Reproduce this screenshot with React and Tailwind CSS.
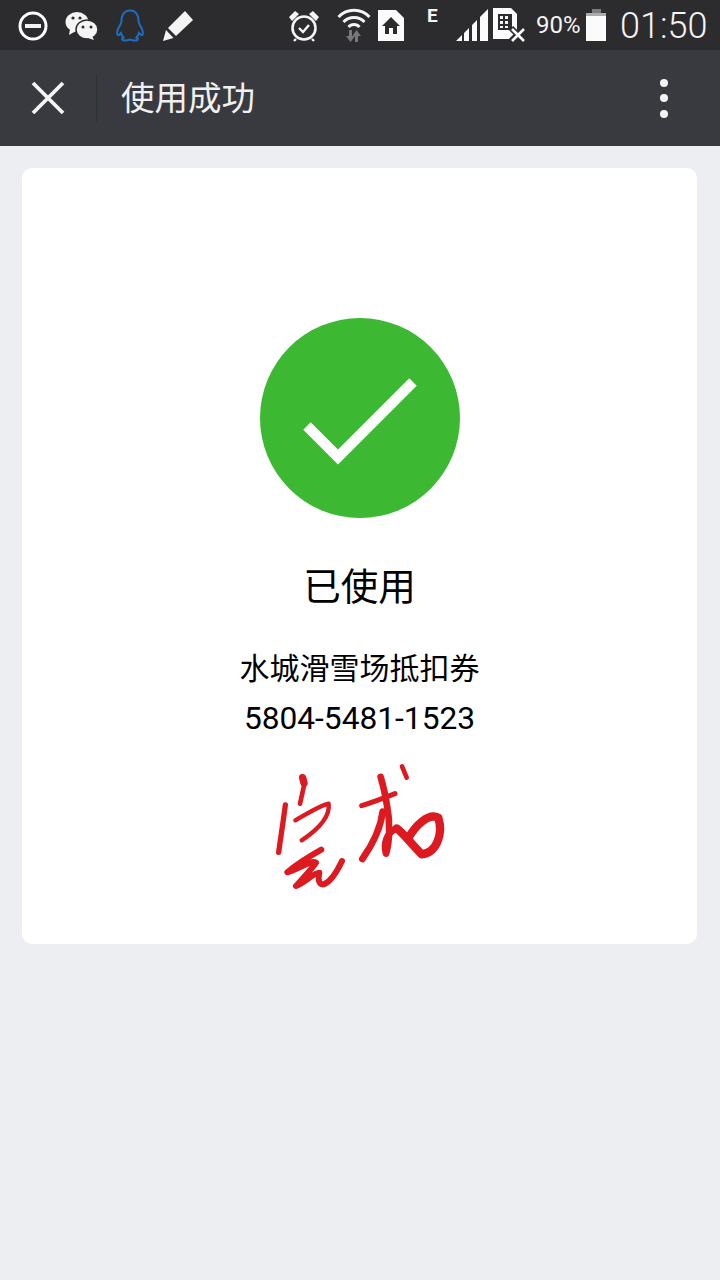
// Coupon "used" result page with a phone status bar and webview header
function StatusIcons() {
  return (
    <>
      {/* do not disturb */}
      <svg width="30" height="30" viewBox="0 0 30 30" className="ml-[18px] shrink-0">
        <circle cx="15" cy="15" r="13" fill="none" stroke="#fff" strokeWidth="3" />
        <rect x="7" y="13" width="16" height="4" fill="#f2f2f2" />
      </svg>
      {/* wechat */}
      <svg width="33" height="30" viewBox="0 0 33 30" className="ml-[17px] shrink-0">
        <ellipse cx="12" cy="11" rx="11.5" ry="10" fill="#f4f4f4" />
        <path d="M5 18 L4 24 L11 20 Z" fill="#f4f4f4" />
        <ellipse cx="22" cy="18.5" rx="11" ry="9.5" fill="#f4f4f4" stroke="#2c2c2e" strokeWidth="1.5" />
        <path d="M27 25 L29 29 L23 27 Z" fill="#f4f4f4" />
        <circle cx="8" cy="7" r="1.6" fill="#2c2c2e" />
        <circle cx="15" cy="7" r="1.6" fill="#2c2c2e" />
        <circle cx="18" cy="16" r="1.5" fill="#2c2c2e" />
        <circle cx="26" cy="16" r="1.5" fill="#2c2c2e" />
      </svg>
      {/* qq penguin */}
      <svg width="30" height="33" viewBox="0 0 30 33" className="ml-[17px] shrink-0">
        <path
          d="M15 1.5 C8.5 1.5 6.5 7 6.5 12 C6.5 14.5 5 16 3.5 19 C2 22 1.5 25.5 3 26 C4 26.3 5 25 6 24 C6.5 26 7.5 27.5 8.5 28.5 C6.5 29.5 6.5 31.5 10 31.5 C12 31.5 13.5 31 15 30.5 C16.5 31 18 31.5 20 31.5 C23.5 31.5 23.5 29.5 21.5 28.5 C22.5 27.5 23.5 26 24 24 C25 25 26 26.3 27 26 C28.5 25.5 28 22 26.5 19 C25 16 23.5 14.5 23.5 12 C23.5 7 21.5 1.5 15 1.5 Z"
          fill="none"
          stroke="#1a6fc4"
          strokeWidth="2"
        />
      </svg>
      {/* edit pencil */}
      <svg width="30" height="30" viewBox="0 0 30 30" className="ml-[18px] shrink-0">
        <path d="M22 0 L30 9 L13 25 L5 17 Z" fill="#f4f4f4" />
        <path d="M3 19 L10.5 27 L0 30 Z" fill="#f4f4f4" />
      </svg>
      {/* alarm */}
      <svg width="32" height="32" viewBox="0 0 32 32" className="ml-[95px] shrink-0">
        <circle cx="16" cy="18" r="11.5" fill="none" stroke="#f4f4f4" strokeWidth="2.6" />
        <path d="M11 18 L15 22 L21 15" fill="none" stroke="#f4f4f4" strokeWidth="2.4" />
        <path d="M1 7 L7 1 L11 4 L4 11 Z M31 7 L25 1 L21 4 L28 11 Z" fill="#f4f4f4" />
        <path d="M8 29 L6 31 M24 29 L26 31" stroke="#f4f4f4" strokeWidth="2.4" />
      </svg>
      {/* wifi with transfer arrows */}
      <svg width="34" height="36" viewBox="0 0 34 36" className="ml-[17px] -mt-[4px] shrink-0">
        <path d="M1.5 11 C10 2 24 2 32.5 11" fill="none" stroke="#f4f4f4" strokeWidth="3" />
        <path d="M6.5 16 C12 10 22 10 27.5 16" fill="none" stroke="#f4f4f4" strokeWidth="3" />
        <path d="M11.5 21 C14.5 17.5 19.5 17.5 22.5 21" fill="none" stroke="#f4f4f4" strokeWidth="3" />
        <path d="M12 24 h3 v6 h3 l-4.500 6 l-4.500 -6 h3 Z" fill="#77787a" />
        <path d="M21 36 h-3 v-6 h-2.500 l4 -6 l4.500 6 h-3 Z" fill="#77787a" />
      </svg>
      {/* sim card with home */}
      <svg width="26" height="31" viewBox="0 0 26 31" className="ml-[7px] shrink-0">
        <path d="M0 0 H18 L26 8 V31 H0 Z" fill="#fbfbfb" />
        <path d="M13 7 L22 16 H19 V24 H15 V18 H11 V24 H7 V16 H4 Z" fill="#2c2c2e" />
      </svg>
      <span className="ml-[23px] -mt-[20px] w-[12px] shrink-0 text-[19px] leading-[20px] font-bold text-[#f4f4f4] font-['Roboto',sans-serif]">
        E
      </span>
      {/* signal bars */}
      <svg width="32" height="32" viewBox="0 0 32 32" className="ml-[17px] -mt-[1px] shrink-0">
        <path d="M0 32 L6 26 V32 Z M8 32 V24 L13 19 V32 Z M16 32 V16 L21 11 V32 Z M24 32 V8 L32 0 V32 Z" fill="#fbfbfb" />
      </svg>
      {/* sim card, no service */}
      <svg width="33" height="34" viewBox="0 0 33 34" className="ml-[5px] -mt-[2px] shrink-0">
        <path d="M0 0 H18 L24 6 V31 H0 Z" fill="#fbfbfb" />
        <path d="M5 6 H19 V22 H5 Z" fill="#2c2c2e" />
        <path d="M7 8 H10 V11 H7 Z M12 8 H15 V11 H12 Z M7 13 H10 V16 H7 Z M12 13 H15 V16 H12 Z M7 18 H10 V20 H7 Z M12 18 H15 V20 H12 Z" fill="#f4f4f4" />
        <path d="M18 20 L31 33 M31 20 L18 33" stroke="#2c2c2e" strokeWidth="6" />
        <path d="M19 21 L31 33 M31 21 L19 33" stroke="#fbfbfb" strokeWidth="2.6" />
      </svg>
      <span className="ml-[10px] -mt-[1px] w-[44px] shrink-0 text-[24px] leading-[30px] text-[#f4f4f4] font-['Roboto',sans-serif]">
        90%
      </span>
      {/* battery */}
      <svg width="20" height="32" viewBox="0 0 20 32" className="ml-[6px] -mt-[1px] shrink-0">
        <rect x="6" y="0" width="9" height="4" fill="#7d7e80" />
        <rect x="0" y="4" width="20" height="4" fill="#a9aaac" />
        <rect x="0" y="7" width="20" height="25" fill="#fbfbfb" />
      </svg>
      <span className="ml-[14px] shrink-0 text-[36px] leading-[40px] font-light text-[#f4f4f4] font-['Roboto',sans-serif]">
        01:50
      </span>
    </>
  );
}

function Signature() {
  return (
    <svg width="210" height="150" viewBox="0 0 630 450" className="block" fill="none" strokeLinecap="round" strokeLinejoin="round">
      <g stroke="#dc1a20">
        <path d="M158 80 L162 96" strokeWidth="22" />
        <path d="M163 100 L150 158" strokeWidth="14" />
        <path d="M106 162 C100 210 92 260 86 304" strokeWidth="16" />
        <path d="M136 208 C170 190 205 165 236 158 C240 190 215 228 155 268" strokeWidth="13" />
        <path d="M214 296 C180 315 140 340 112 364 C150 352 185 325 198 335 C180 360 155 385 138 405 C165 395 190 365 208 365 C204 385 205 402 222 400 C245 390 262 360 276 330" strokeWidth="18" />
        <path d="M392 78 C400 105 405 125 412 170 C420 210 420 270 408 308 C400 280 408 245 440 232" strokeWidth="20" />
        <path d="M440 232 C462 248 480 275 515 310 C560 305 580 250 565 200 C535 185 495 225 475 262" strokeWidth="25" />
        <path d="M335 164 C365 155 405 140 435 128" strokeWidth="15" />
        <path d="M398 182 C392 230 368 280 337 324" strokeWidth="20" />
        <path d="M456 46 L470 80" strokeWidth="14" />
      </g>
    </svg>
  );
}

export default function App() {
  return (
    <div className="flex min-h-[1280px] w-[720px] flex-col bg-[#eceef1] font-['Noto_Sans_CJK_SC',sans-serif]">
      <div className="flex h-[50px] items-center bg-[#2c2c2e] pt-[1px]">
        <StatusIcons />
      </div>

      <div className="flex h-[96px] items-center bg-[#393a3f]">
        <svg width="34" height="34" viewBox="0 0 34 34" className="ml-[31px] shrink-0">
          <path d="M2 2 L32 32 M32 2 L2 32" stroke="#f5f5f5" strokeWidth="3.8" />
        </svg>
        <div className="ml-[31px] h-[48px] w-px bg-[#2f3034]" />
        <h1 className="ml-[24px] -mt-[4px] text-[33.500px] leading-[48px] font-normal text-[#f0f0f0]">使用成功</h1>
        <div className="ml-auto mr-[52px] flex flex-col gap-[7.500px]">
          <div className="h-[8px] w-[8px] rounded-full bg-[#f5f5f5]" />
          <div className="h-[8px] w-[8px] rounded-full bg-[#f5f5f5]" />
          <div className="h-[8px] w-[8px] rounded-full bg-[#f5f5f5]" />
        </div>
      </div>

      <div className="ml-[22px] mt-[22px] flex h-[776px] w-[675px] flex-col items-center rounded-[10px] bg-white pt-[150px] text-black">
        <div className="flex h-[200px] w-[200px] items-center justify-center rounded-full bg-[#3cb833]">
          <svg width="200" height="200" viewBox="0 0 200 200">
            <path d="M47 108 L78 139 L153 64" fill="none" stroke="#fff" strokeWidth="10.500" />
          </svg>
        </div>
        <p className="mt-[42px] text-[37.500px] leading-[48px]">已使用</p>
        <p className="mt-[36px] text-[30px] leading-[44px]">水城滑雪场抵扣券</p>
        <p className="mt-[9px] text-[31.700px] leading-[44px] font-['Roboto',sans-serif]">5804-5481-1523</p>
        <div className="mt-[10px] mr-[9px]">
          <Signature />
        </div>
      </div>
    </div>
  );
}
